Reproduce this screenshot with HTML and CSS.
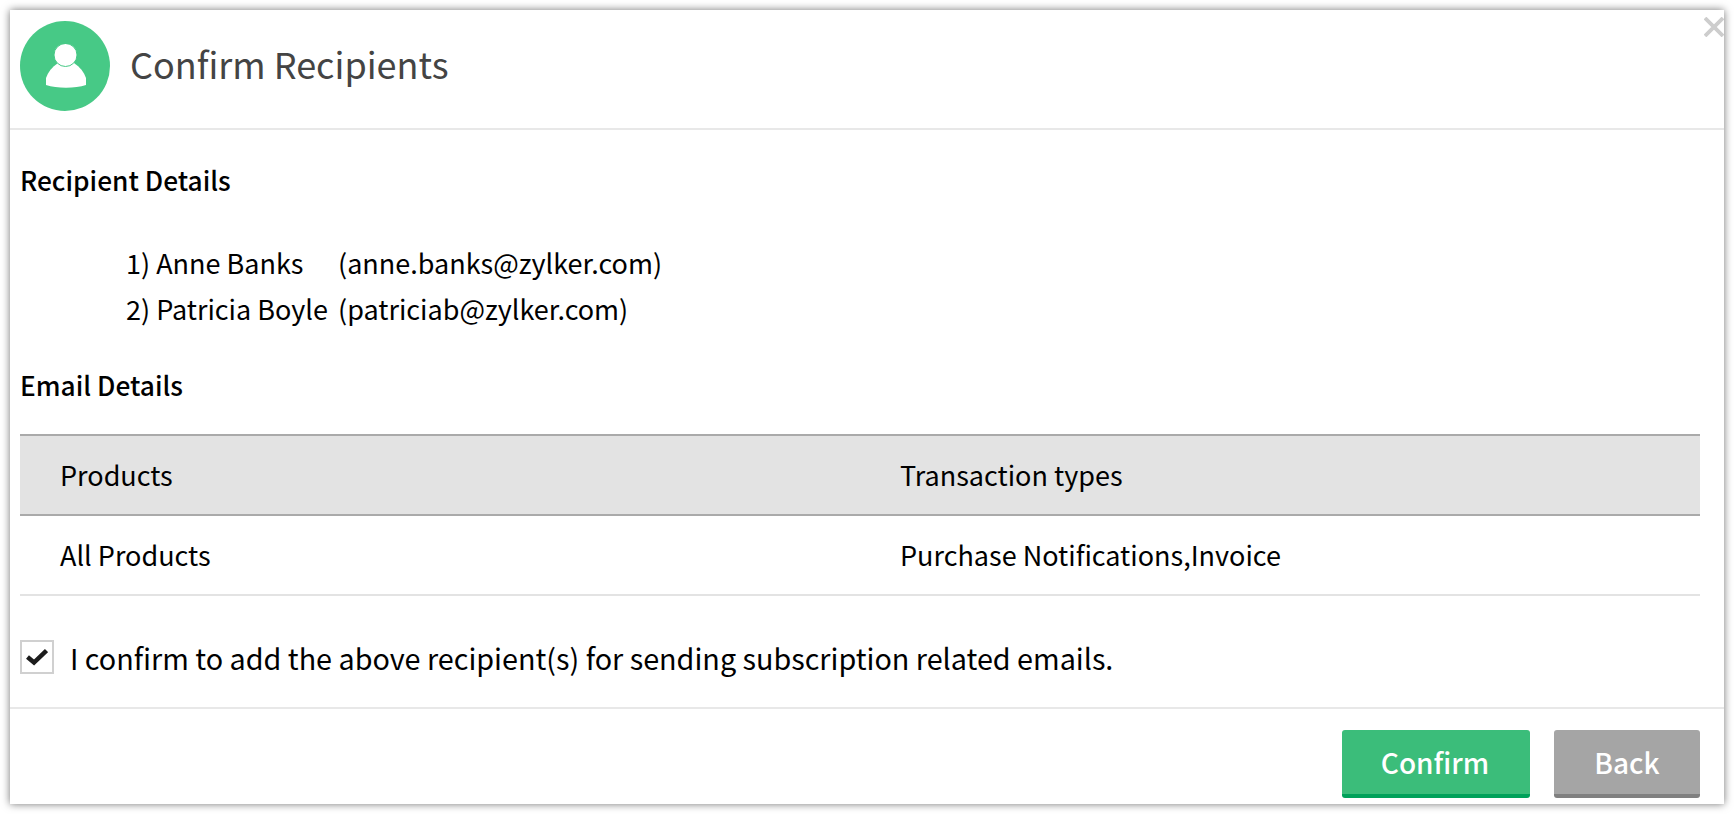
FILE: index.html
```html
<!DOCTYPE html>
<html lang="en">
<head>
    <meta charset="UTF-8">
    <title>Confirm Recipients</title>
    <link rel="stylesheet" href="styles.css">
</head>
<body>

    <div class="dialog">
        <svg class="close" width="20" height="20" viewBox="0 0 20 20">
            <path d="M1 1 L19 19 M19 1 L1 19" stroke="#cdcdcd" stroke-width="3.800" fill="none"/>
        </svg>

        <div class="header">
            <div class="avatar">
                <svg class="avatar-icon" width="42" height="44" viewBox="0 0 42 44">
                    <path d="M13 19 C7 23 3 28 1 34 L1 41 C12 44.500 30 44.500 41 41 L41 34 C39 28 35 23 29 19 Z" fill="#fff"/>
                    <circle cx="20.500" cy="11" r="11.500" fill="#fff" stroke="#47c986" stroke-width="1"/>
                </svg>
            </div>
            <h1 class="title">Confirm Recipients</h1>
        </div>

        <div class="content">
            <h2 class="section-title">Recipient Details</h2>
            <div class="recipients">
                <div class="recipient">
                    <span class="recipient-name">1) Anne Banks</span>
                    <span>(anne.banks@zylker.com)</span>
                </div>
                <div class="recipient">
                    <span class="recipient-name">2) Patricia Boyle</span>
                    <span>(patriciab@zylker.com)</span>
                </div>
            </div>

            <h2 class="section-title email-title">Email Details</h2>
            <div class="table">
                <div class="table-head">
                    <div class="col-products">Products</div>
                    <div>Transaction types</div>
                </div>
                <div class="table-row">
                    <div class="col-products">All Products</div>
                    <div>Purchase Notifications,Invoice</div>
                </div>
            </div>

            <label class="confirm-line">
                <span class="checkbox">
                    <svg width="22" height="18" viewBox="0 0 22 18">
                        <path d="M1.500 9 L8 14.500 L20.500 2.500" stroke="#1c1c1c" stroke-width="4.500" fill="none"/>
                    </svg>
                </span>
                <span>I confirm to add the above recipient(s) for sending subscription related emails.</span>
            </label>
        </div>

        <div class="footer">
            <a class="btn btn-confirm">Confirm</a>
            <a class="btn btn-back">Back</a>
        </div>
    </div>

</body>
</html>
```

FILE: styles.css
```css
* {
    box-sizing: border-box;
}

html, body {
    height: 100%;
}

body {
    margin: 0;
    padding: 10px;
    background-color: #ffffff;
    color: #000000;
    font-family: "Noto Sans CJK SC", "Noto Sans", sans-serif;
    font-size: 27px;
}

.dialog {
    position: relative;
    height: 794px;
    background-color: #ffffff;
    box-shadow: 0 0 8px rgba(0, 0, 0, 0.55);
    overflow: hidden;
}

.close {
    position: absolute;
    top: 7px;
    right: 0;
    filter: blur(0.4px);
}

/* HEADER */
.header {
    display: flex;
    align-items: center;
    height: 120px;
    padding-left: 10px;
    padding-bottom: 6px;
    border-bottom: 2px solid #e8e8e8;
}

.avatar {
    display: flex;
    align-items: center;
    justify-content: center;
    width: 90px;
    height: 90px;
    padding-left: 2px;
    border-radius: 50%;
    background-color: #47c986;
}

.avatar-icon {
    filter: blur(0.5px);
}

.title {
    margin: 0 0 7px 20px;
    font-size: 36px;
    font-weight: 400;
    color: #444444;
}

/* MAIN CONTENT */
.content {
    padding: 0 24px 0 10px;
}

.section-title {
    margin: 0;
    padding-top: 30px;
    font-size: 26.300px;
    line-height: 40px;
    font-weight: 500;
}

.recipients {
    margin-top: 40px;
    padding-left: 106px;
}

.recipient {
    display: flex;
    height: 46px;
    line-height: 46px;
}

.recipient-name {
    width: 212px;
}

.email-title {
    padding-top: 33px;
}

.table {
    margin-top: 29px;
}

.table-head, .table-row {
    display: flex;
    align-items: center;
    padding-bottom: 2px;
}

.table-head {
    height: 82px;
    background-color: #e3e3e3;
    border-top: 2px solid #aaaaaa;
    border-bottom: 2px solid #aaaaaa;
}

.table-row {
    height: 80px;
    border-bottom: 2px solid #e3e3e3;
}

.col-products {
    width: 880px;
    padding-left: 40px;
}

.confirm-line {
    display: flex;
    align-items: center;
    margin-top: 44px;
    height: 34px;
    font-size: 28.750px;
}

.checkbox {
    display: flex;
    align-items: center;
    justify-content: center;
    width: 34px;
    height: 34px;
    margin-right: 16px;
    border: 2px solid #d0d0d0;
}

/* FOOTER */
.footer {
    display: flex;
    justify-content: flex-end;
    gap: 24px;
    margin-top: 33px;
    padding: 21px 24px 0 0;
    border-top: 2px solid #e8e8e8;
}

.btn {
    display: block;
    height: 68px;
    line-height: 64px;
    padding-right: 2px;
    border-radius: 3px;
    text-align: center;
    font-size: 28px;
    font-weight: 500;
    color: #ffffff;
}

.btn-confirm {
    width: 188px;
    background-color: #3bbd7a;
    border-bottom: 4px solid #00a15a;
}

.btn-back {
    width: 146px;
    padding-right: 0;
    background-color: #a5a5a5;
    border-bottom: 4px solid #808080;
}
```
